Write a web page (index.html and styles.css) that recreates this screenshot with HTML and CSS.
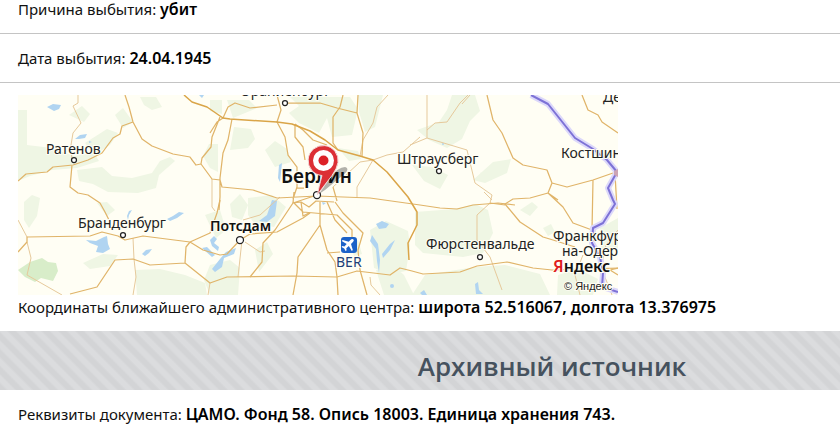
FILE: index.html
```html
<!DOCTYPE html>
<html lang="ru">
<head>
<meta charset="utf-8">
<meta name="viewport" content="width=device-width, initial-scale=1">
<title>Архивный источник</title>
<link rel="stylesheet" href="styles.css">
</head>
<body>
<main>
  <p class="row row-first">Причина выбытия: <b>убит</b></p>
  <p class="row">Дата выбытия: <b>24.04.1945</b></p>
  <section class="place">
    <svg class="map" viewBox="18 95 600 200" role="img" aria-label="Берлин">
      <rect class="land" x="18" y="95" width="600" height="200"/>
      <g class="forest">
        <path d="M18 110h9v35l25 3 22 8 20-3 5 8-22 7-25 2-22 6-12 5zM69 115l13-9 8 8-6 8zM85 143l22-14 11 4-8 12-16 10zM115 115l8-7 10 14-10 6zM140 97h16l6 10-10 3-8-5zM77 170l25-3 10 9 20 2 20-5 8-12 10-4 5 4-16 14-3 13-18 5-30-1-15-8-14-3zM24 202l8-7 8 3-3 18-8 12-5-8zM97 203l10-1 8 8-8 6zM83 263l20-9 15 1-8 11-20 3zM210 100h12v14l-12-3zM203 156l6-12h9v28l-8-4z"/>
        <path class="forest-deep" d="M18 270l12-8 12-4 6 4 8 1 2 8-5 10-12-3-6 4-10-5z"/>
        <path d="M135 270l25-1 25 6 20 8 2 12h-70zM205 215l15-5 6 20-10 8zM210 265l20-5 10 8-2 27h-28l-6-15z"/>
        <path d="M227 100h22l8 8-24 10zM234 127l17 2 4 10-7 9-18 2zM265 150l10-9 12 8 4 13-16 5zM290 97h60l8 12-6 26-20 2-5-19-8 15-20-10-10-10 10-7zM338 148l20 3 3 8-12 2zM358 95h25l-8 32-10 5-6-20zM230 204l10-10 8 11-6 15-10-3zM248 198l24-3 14 12-12 20-20-4-6-8zM255 250l12-8 6 12-14 18zM350 245l8-5 4 14-8 2zM370 230l16-9 22 10 2 15-4 25-16 3-16-6zM376 270l18-4 10 9 10 20h-30z"/>
        <path d="M452 95h23l5 16-10 10-8 18-15 9-18-8-12-10 22-8 8-12zM412 165l20 2 16 8-8 14-16-8zM473 180l20-18 18-3-4 14-22 10zM415 212l40-3 20-5 13 6 5 23-10 20-20 4-40-4-8-8zM425 275l50-8 30-2 35 9 10 21H412zM520 210l12-8 6 5-8 9zM543 228l8-4 4 8-7 4zM600 228l18-10v30l-17 4zM558 275l20-6 20 10-5 16h-36zM480 173l18-9 7 7-16 9z"/>
      </g>
      <g class="water">
        <path d="M47 107l6-3 8 1-2 4-5 2zM75 139l5-4 7-1-2 4-6 1zM89 141l3 1-3 1zM199 95h5l-2 3zM86 240l10 1 8-4 3-1 1 8 2 5-7 4-7-1 2-6-8-3zM142 254l4-4 6-1-3 4-4 3zM127 216l2-5 3-1-3 5-1 5zM167 219l6-3 6-4 5 1-7 5-7 3zM202 248l5-1 8 8-3 2zM212 269l8-10 6-7 10-4-2 6-10 4-2 9-7 5zM272 200l5 1-2 15-8 6-8-1 8-6zM210 240l4-4 3 3-3 4 5 4-1 4-6-5zM279 165l3-2-2 19-2-4z"/>
        <path d="M376 224l6-3 7 3-3 4-7 1zM372 235l6 9 2 16-1 13-2-12-1-12-6-8zM382 254l8-10 5-4-5 10-7 8zM475 284l3-2 1 8 4 4h-7zM420 293l4-3 3 5h-5zM322 202l4 1-3 2z"/>
        <circle cx="443" cy="144" r="1"/><circle cx="392" cy="286" r="2"/>
      </g>
      <g class="road road-minor">
        <path d="M78 95v8l-5 3 8 17-8 10-2 12 1 17M18 220l9 17M27 242l4 16-4 17 35 20M133 238l1 21 2 18-3 18M212 179v28l3 4M238 277l4-37M245 242l15 10 5-1M280 197l-20 18-17 5M388 95l-11 12-4 16-10 17-3 16M420 137l-17 15-16 3-14 5-16 27v11M427 95v43l40 12 8 33 17 12-2 8-13 12v25l13 17 12 33M410 145l17-7M427 130l8-7 12-1 13-19 8-8M333 187l27-25 13-2M370 277l1 8 9 10M210 283l-2 12M618 230l-12 15-5 22 11 28M583 255l-8 20 5 20M470 95l-8 9M484 192l8 8"/>
      </g>
      <g class="road">
        <path d="M18 181l8-7 21-2 6-5 20-2 15-5 14-7 11-15 7-4 2-8 11-4M125 95l4 12 4 15 9 17 10 7 21 8 17 3 6 8 5-1M72 165l-2 22 8 6 10 2 12 8 5 9 4 8"/>
        <path d="M18 252l9-10v-5l63-1 12-4 16 4 7 4 18-4 47 6 13 8 17 5 7-1 13-14 10-6 27-2 26-14 7-5M70 294l27-7 18-27 18-1 17 6 35-2 25 20 17-6 66-1 44 1 20-6 33 4 10-7 12 3 11 3 37-2 17-6 30-4 26 6 19 2 66-2M190 242l-4 5-1 16M190 242l20-9 7-20 3-13"/>
        <path d="M220 117l-8 20-1 10-9 11-1 6 11 15 8 1 2 7 31 3 24 8 40-2 26 1 27 1 50 7 20 3 17 1 16-4 25-2 17 2M232 119l-4 21-5 13-3 25v19l-1 13M210 133l7-11 6-4 5-11 7-4 15 5 27-3M277 95l4 15-4 12 8 15 3 18 9 12v20l-4 12M285 103h35l17 5 20 5M358 95l-1 18 6 20-1 23M343 95l-3 12-7 10v26l5 7M295 124v13l8 10 2 13M295 124l8 6 10 10 14 5M333 187l4 14M297 188h7M293 203l1-11"/>
        <path d="M250 277l12-15 1-19 12-13 18-27 24-8M320 202v23l-22 32-1 16-4 22M320 225l7 25 8 12 2 15 1 18M293 202l10 10 34 3 15 15v7M327 202l8 18 12 13M335 202l8 11 20 20-5 17 2 20 7 25M327 253l13-1M293 203l8-1 8 5 7-6 18 1M301 202l2 14 6-3"/>
        <path d="M487 95l6 25 9 13 11 25 10 7 24 5 5 13 15 4 26-7 20-7M552 183l-4 10 15 14 10 16 19 7 1-50M548 193l-18 5-17 1-8 5 15 18 23 15 10 3 22 7M582 95l6 15 10 5 4 7 16 11M505 205l-15-2M548 193l10 7M615 174l2 35M618 268l-8 2 8 5"/>
      </g>
      <path class="road road-major" d="M184 95l8 7 15 5 16 11 7 1 47 3 15 2 18 7 15 9 13 10 22 6 13 4 14 12 21 25 9 15v13l-9 18 1 17"/>
      <g class="border">
        <path class="border-glow" d="M531 95l17 9 27 34 18 11 14 11 10 12-9 16 5 12 2 4-12 19-10 5-1 15 8 14 3 16-1 14 16 5"/>
        <path class="border-line" d="M531 95l17 9 27 34 18 11 14 11 10 12-9 16 5 12 2 4-12 19-10 5-1 15 8 14 3 16-1 14 16 5"/>
      </g>
      <path class="crossing" d="M614 171l4-2v8l-4-2z"/>
      <g class="towns">
        <circle cx="74" cy="160" r="2.500"/><circle cx="123" cy="235" r="2.500"/><circle cx="285" cy="103" r="2.500"/><circle cx="439" cy="171" r="2.500"/><circle cx="480" cy="257" r="2.500"/>
        <circle cx="240" cy="240" r="3.500"/><circle cx="317" cy="195" r="3.500"/>
      </g>
      <g class="labels">
        <text x="46" y="154">Ратенов</text>
        <text x="78" y="228">Бранденбург</text>
        <text x="240" y="96">Ораниенбург</text>
        <text x="397" y="164">Штраусберг</text>
        <text x="426" y="249">Фюрстенвальде</text>
        <text x="561" y="158">Костшин</text>
        <text x="603" y="102">Дембно</text>
        <text x="553" y="241">Франкфурт-</text>
        <text x="562" y="256">на-Одере</text>
        <text class="label-city" x="210" y="231">Потсдам</text>
        <text class="label-capital" x="281" y="183">Берлин</text>
        <text class="label-airport" x="336" y="267">BER</text>
      </g>
      <g>
        <rect class="airport" x="341" y="237" width="16" height="16" rx="3"/>
        <path class="plane" d="M353.500 239.500q1 1-.8 2.800l-1.700 1.700 1.800 6-1 1-3-5-2.500 2.300.3 2-.9.900-1.500-2.700-2.700-1.500.9-.9 2 .3 2.300-2.500-5-3 1-1 6 1.800 1.700-1.700q1.900-1.800 3.100-.5z"/>
      </g>
      <path class="pin-shadow" d="M319 194l11-16q8-11 15-11 6 2-3 9l-17 14z"/>
      <path class="pin" d="M317.500 194.500q1-6 4.500-19a15 15 0 1 1 16-13q-1 6-6 13-7 9-14.500 19z"/>
      <circle class="pin-ring" cx="323.500" cy="160.500" r="10.500"/>
      <circle class="pin-dot" cx="323.500" cy="160.500" r="5"/>
      <text class="brand" x="553" y="272"><tspan class="brand-first">Я</tspan>ндекс</text>
      <text class="copyright" x="564" y="290">© Яндекс</text>
    </svg>
    <p class="coords">Координаты ближайшего административного центра: <b>широта 52.516067, долгота 13.376975</b></p>
  </section>
  <h2 class="band">Архивный источник</h2>
  <p class="source">Реквизиты документа: <b>ЦАМО. Фонд 58. Опись 18003. Единица хранения 743.</b></p>
</main>
</body>
</html>
```
FILE: styles.css
```css
body {
  margin: 0;
  background: #fff;
  color: #111;
  font: 15px/24px "Noto Sans", sans-serif;
}

p {
  margin: 0;
}

b {
  color: #000;
  font-size: 16px;
  font-weight: 600;
  line-height: 20px;
}

.row {
  padding: 12px 18px;
  border-bottom: 1px solid #c4c4c4;
}

.row-first {
  padding-top: 0;
  margin-top: -3px;
}

.place {
  padding: 12px 18px;
}

.map {
  display: block;
  width: 100%;
  max-width: 600px;
  overflow: hidden;
}

.band {
  box-sizing: border-box;
  margin: 0;
  padding: 17px 0 6px 264px;
  background: repeating-linear-gradient(45deg, #d3d4d6 0 4px, #dbdcde 6px 10px, #d3d4d6 12px);
  color: #46525e;
  font: 600 26px/36px "Open Sans", sans-serif;
  text-align: center;
}

.source {
  padding: 12px 18px;
}

.land { fill: #fffef4; }
.forest { fill: #eff6e4; }
.forest-deep { fill: #d8edc9; }
.water { fill: #b0d4f1; }

.road {
  fill: none;
  stroke: #e0b469;
  stroke-width: 1.25;
  stroke-linejoin: round;
}

.road-minor {
  stroke: #e6c99b;
  stroke-width: 1;
}

.road-major {
  stroke: #daa548;
  stroke-width: 1.5;
}

.border {
  fill: none;
  stroke-linejoin: round;
}

.border-glow {
  stroke: #dcd8fa;
  stroke-width: 6;
}

.border-line {
  stroke: #7d72d6;
  stroke-width: 2;
}

.crossing { fill: #cda5b5; }

.towns {
  fill: #fff;
  stroke: #222;
  stroke-width: 1.25;
}

.labels {
  fill: #222;
  stroke: #fffef4;
  stroke-width: 2;
  paint-order: stroke;
  font: 14px "Noto Sans", sans-serif;
}

.label-city {
  fill: #111;
  font-weight: 600;
}

.label-capital {
  fill: #111;
  font-size: 19px;
  font-weight: 600;
}

.label-airport {
  fill: #213f78;
}

.airport { fill: #1c62c8; }
.plane { fill: #fff; }

.pin-shadow {
  fill: #000;
  opacity: 0.3;
}

.pin {
  fill: #dc2f35;
  stroke: #f3d8d8;
  stroke-width: 1;
}

.pin-ring { fill: #fff; }
.pin-dot { fill: #dc2127; }

.brand {
  fill: #111;
  stroke: #fffef4;
  stroke-width: 2;
  paint-order: stroke;
  font: 600 16px "Noto Sans", sans-serif;
}

.brand-first { fill: #e01c1c; }

.copyright {
  fill: #222;
  stroke: #fffef4;
  stroke-width: 2;
  paint-order: stroke;
  font: 11px "Liberation Sans", sans-serif;
}
```
